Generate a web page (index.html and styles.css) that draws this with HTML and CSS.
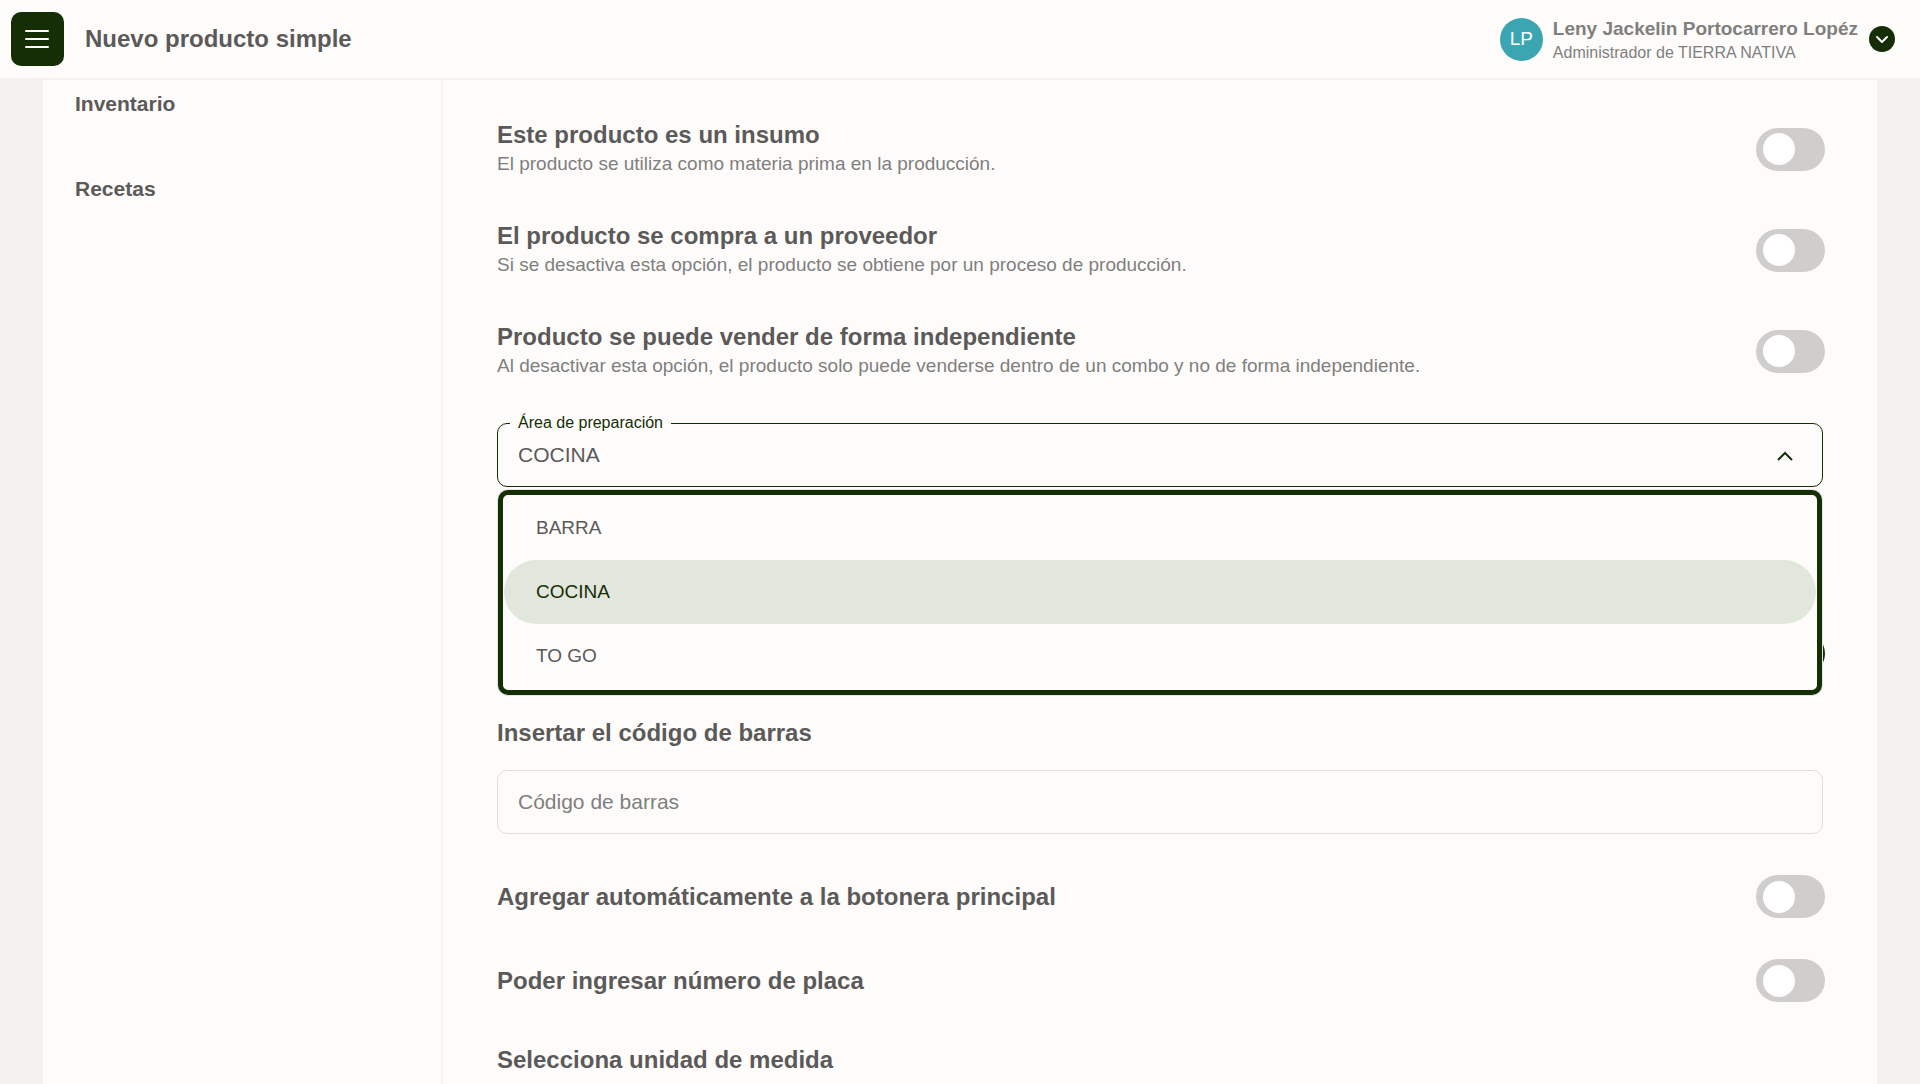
FILE: index.html
```html
<!DOCTYPE html>
<html lang="es">
<head>
  <meta charset="utf-8">
  <meta name="viewport" content="width=device-width, initial-scale=1">
  <title>Nuevo producto simple</title>
  <link rel="stylesheet" href="styles.css">
</head>
<body>
  <header class="topbar">
    <button class="menu-button" type="button" aria-label="Menú">
      <svg viewBox="0 0 24 24" width="24" height="24" fill="none" stroke="currentColor" stroke-width="2" stroke-linecap="round"><path d="M1 4h22M1 12h22M1 20h22"/></svg>
    </button>
    <h1 class="page-title">Nuevo producto simple</h1>
    <div class="user">
      <span class="avatar">LP</span>
      <div class="user-text">
        <span class="user-name">Leny Jackelin Portocarrero Lopéz</span>
        <span class="user-role">Administrador de TIERRA NATIVA</span>
      </div>
      <button class="user-toggle" type="button" aria-label="Cuenta">
        <svg viewBox="0 0 26 26" width="26" height="26" fill="none" stroke="currentColor" stroke-width="2" stroke-linecap="round" stroke-linejoin="round"><path d="M8 11l5 5 5-5"/></svg>
      </button>
    </div>
  </header>

  <div class="sheet">
    <nav class="sidebar">
      <a class="side-link" href="#inventario">Inventario</a>
      <a class="side-link" href="#recetas">Recetas</a>
    </nav>

    <main class="content">
      <div class="row row-described">
        <div>
          <label class="row-title" for="insumo">Este producto es un insumo</label>
          <p class="row-text">El producto se utiliza como materia prima en la producción.</p>
        </div>
        <input class="switch" type="checkbox" role="switch" id="insumo">
      </div>
      <div class="row row-described">
        <div>
          <label class="row-title" for="proveedor">El producto se compra a un proveedor</label>
          <p class="row-text">Si se desactiva esta opción, el producto se obtiene por un proceso de producción.</p>
        </div>
        <input class="switch" type="checkbox" role="switch" id="proveedor">
      </div>
      <div class="row row-described">
        <div>
          <label class="row-title" for="independiente">Producto se puede vender de forma independiente</label>
          <p class="row-text">Al desactivar esta opción, el producto solo puede venderse dentro de un combo y no de forma independiente.</p>
        </div>
        <input class="switch" type="checkbox" role="switch" id="independiente">
      </div>

      <div class="area">
        <label class="area-label" for="area">Área de preparación</label>
        <select class="field area-select" id="area">
          <option>BARRA</option>
          <option selected>COCINA</option>
          <option>TO GO</option>
        </select>
        <svg class="area-arrow" viewBox="0 0 16 10" width="16" height="10" fill="none" stroke="currentColor" stroke-width="2"><path d="M1 9l7-7 7 7"/></svg>
        <ul class="options" role="listbox" aria-label="Área de preparación">
          <li class="option" role="option" aria-selected="false">BARRA</li>
          <li class="option option-selected" role="option" aria-selected="true">COCINA</li>
          <li class="option" role="option" aria-selected="false">TO GO</li>
        </ul>
      </div>

      <div class="row row-barcode">
        <input class="switch" type="checkbox" role="switch" aria-label="Código de barras" checked>
      </div>

      <div class="stack">
        <label class="heading" for="codigo">Insertar el código de barras</label>
        <input class="field" type="text" id="codigo" placeholder="Código de barras">
      </div>

      <div class="row">
        <label class="heading" for="botonera">Agregar automáticamente a la botonera principal</label>
        <input class="switch" type="checkbox" role="switch" id="botonera">
      </div>
      <div class="row">
        <label class="heading" for="placa">Poder ingresar número de placa</label>
        <input class="switch" type="checkbox" role="switch" id="placa">
      </div>
      <h2 class="heading">Selecciona unidad de medida</h2>
    </main>
  </div>
</body>
</html>
```
FILE: styles.css
```css
:root {
  --green: #162e05;
  --paper: #fdfcfb;
  --line: #f3f2f1;
  --text: #5b5a59;
  --muted: #807f7e;
}

* {
  box-sizing: border-box;
}

body {
  margin: 0;
  min-height: 100vh;
  display: flex;
  flex-direction: column;
  background: #f3f2f1;
  color: var(--text);
  font-family: "Liberation Sans", Arial, sans-serif;
}

h1, h2, p, ul {
  margin: 0;
  padding: 0;
}

button {
  padding: 0;
  border: 0;
  cursor: pointer;
}

/* Top bar */
.topbar {
  position: sticky;
  top: 0;
  z-index: 5;
  display: flex;
  align-items: center;
  height: 80px;
  padding: 0 25px 0 11px;
  background: var(--paper);
  border-bottom: 2px solid var(--line);
}

.menu-button {
  display: flex;
  align-items: center;
  width: 53px;
  height: 54px;
  padding: 0 14px;
  border-radius: 10px;
  background: var(--green);
  color: #fff;
}

.page-title {
  margin-left: 21px;
  font-size: 24px;
  line-height: 34px;
}

.user {
  display: flex;
  align-items: center;
  margin-left: auto;
  color: var(--muted);
}

.avatar {
  display: grid;
  place-items: center;
  width: 43px;
  height: 43px;
  margin-right: 10px;
  border-radius: 50%;
  background: #3ba6b1;
  color: #fff;
  font-size: 19px;
}

.user-text {
  display: flex;
  flex-direction: column;
  padding-top: 3px;
  line-height: 24px;
}

.user-name {
  font-size: 19px;
  font-weight: bold;
}

.user-role {
  font-size: 16px;
}

.user-toggle {
  width: 26px;
  height: 26px;
  margin-left: 11px;
  border-radius: 50%;
  background: var(--green);
  color: #fff;
}

.user-toggle svg {
  display: block;
}

/* Sheet */
.sheet {
  flex: 1;
  display: flex;
  margin: 0 43px;
  background: var(--paper);
}

.sidebar {
  display: flex;
  flex-direction: column;
  gap: 51px;
  width: 400px;
  flex-shrink: 0;
  padding: 7px 32px;
  border-right: 2px solid var(--line);
}

.side-link {
  color: inherit;
  font-size: 21px;
  font-weight: bold;
  line-height: 34px;
  text-decoration: none;
}

.content {
  flex: 1;
  display: flex;
  flex-direction: column;
  gap: 41px;
  padding: 40px 54px 0;
}

/* Option rows */
.row {
  display: flex;
  align-items: center;
  justify-content: space-between;
  margin-right: -2px;
}

.row-described {
  padding-bottom: 2px;
}

.row-title,
.heading {
  display: block;
  font-size: 24px;
  font-weight: bold;
  line-height: 34px;
}

.row-title {
  line-height: 30px;
}

.row-text {
  color: var(--muted);
  font-size: 19px;
  line-height: 28px;
}

.row-barcode {
  justify-content: flex-end;
  margin-top: 104px;
}

.switch {
  appearance: none;
  flex-shrink: 0;
  display: flex;
  align-items: center;
  width: 69px;
  height: 43px;
  margin: 0;
  padding: 0 7px;
  border-radius: 22px;
  background: #cfcecd;
}

.switch::before {
  content: "";
  width: 32px;
  height: 32px;
  border-radius: 50%;
  background: #fff;
}

.switch:checked {
  justify-content: flex-end;
  background: var(--green);
}

/* Fields */
.stack {
  display: flex;
  flex-direction: column;
  gap: 20px;
}

.field {
  display: block;
  width: 100%;
  height: 64px;
  padding: 0 20px;
  border: 1px solid #dfdedd;
  border-radius: 10px;
  background: var(--paper);
  color: var(--text);
  font-family: inherit;
  font-size: 21px;
}

.field::placeholder {
  color: var(--muted);
  opacity: 1;
}

.area {
  position: relative;
}

.area-select {
  appearance: none;
  padding-bottom: 2px;
  border-color: var(--green);
}

.area-label {
  position: absolute;
  top: -10px;
  left: 13px;
  padding: 0 8px;
  background: var(--paper);
  color: var(--green);
  font-size: 16px;
  line-height: 20px;
}

.area-arrow {
  position: absolute;
  top: 28px;
  right: 30px;
  color: var(--green);
}

.options {
  position: absolute;
  z-index: 2;
  top: 67px;
  left: 1px;
  right: 1px;
  padding: 1px 1px 2px;
  border: 5px solid var(--green);
  border-radius: 10px;
  background: var(--paper);
  box-shadow: 0 0 0 1px #e4e6e1;
  list-style: none;
}

.option {
  height: 64px;
  padding: 0 32px;
  border-radius: 32px;
  font-size: 19px;
  line-height: 64px;
}

.option-selected {
  background: #e1e7dd;
  color: var(--green);
}
```
